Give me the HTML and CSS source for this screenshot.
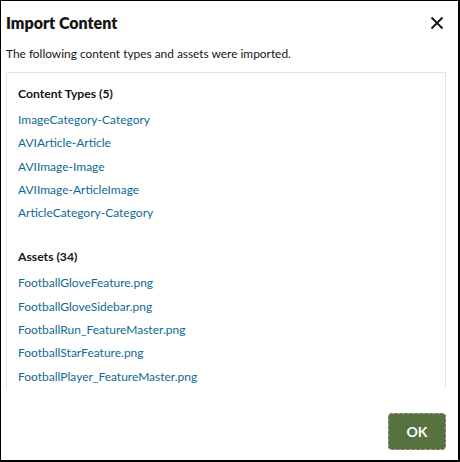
FILE: index.html
```html
<!DOCTYPE html>
<html>
	<head>
		<meta charset="utf-8" />
		<title>Import Content</title>
		<link rel="stylesheet" href="styles.css">
	</head>
	<body>
		<div class="dialog">
			<div class="dialog-header">
				<h1 class="dialog-title">Import Content</h1>
				<button class="close-btn" aria-label="Close">
					<svg width="14" height="14" viewBox="0 0 14 14">
						<path d="M1.5 1.5 L12.5 12.5 M12.5 1.5 L1.5 12.5" stroke="#111" stroke-width="1.8" fill="none"/>
					</svg>
				</button>
			</div>
			<p class="dialog-desc">The following content types and assets were imported.</p>
			<div class="result-box">
				<h2 class="group-title">Content Types (5)</h2>
				<ul class="item-list">
					<li><a href="#">ImageCategory-Category</a></li>
					<li><a href="#">AVIArticle-Article</a></li>
					<li><a href="#">AVIImage-Image</a></li>
					<li><a href="#">AVIImage-ArticleImage</a></li>
					<li><a href="#">ArticleCategory-Category</a></li>
				</ul>
				<h2 class="group-title assets">Assets (34)</h2>
				<ul class="item-list">
					<li><a href="#">FootballGloveFeature.png</a></li>
					<li><a href="#">FootballGloveSidebar.png</a></li>
					<li><a href="#">FootballRun_FeatureMaster.png</a></li>
					<li><a href="#">FootballStarFeature.png</a></li>
					<li><a href="#">FootballPlayer_FeatureMaster.png</a></li>
				</ul>
			</div>
			<div class="dialog-footer">
				<button class="ok-btn">OK</button>
			</div>
		</div>
	</body>
</html>
```

FILE: styles.css
```css
*{
	margin: 0;
	padding: 0;
	box-sizing: border-box;
}
body{
	font-family: Lato, "Liberation Sans", sans-serif;
	background: #fff;
	color: #161513;
}
.dialog{
	width: 460px;
	height: 462px;
	border: 1px solid #000;
	border-right-width: 2px;
	border-bottom-width: 2px;
	display: flex;
	flex-direction: column;
}
.dialog-header{
	display: flex;
	align-items: center;
	justify-content: space-between;
	padding: 10px 14px 0 5px;
	height: 33px;
}
.dialog-title{
	font-size: 16px;
	font-weight: 800;
	line-height: 22px;
}
.close-btn{
	border: none;
	background: none;
	width: 14px;
	height: 14px;
	display: flex;
}
.dialog-desc{
	font-size: 11.9px;
	line-height: 18px;
	padding: 11px 0 0 5px;
	height: 38px;
}
.result-box{
	margin: 0 12px 0 5px;
	height: 316px;
	overflow: hidden;
	border: 1px solid #e4e4e4;
	border-bottom: none;
	padding: 12px 12px 0 11px;
}
.group-title{
	font-size: 12.2px;
	font-weight: 700;
	line-height: 18px;
	margin-bottom: 8px;
}
.group-title.assets{
	margin-top: 21px;
}
.item-list{
	list-style: none;
}
.item-list li{
	font-size: 12px;
	line-height: 18px;
	height: 23.3px;
}
.item-list a{
	color: #0f6a93;
	text-decoration: none;
}
.dialog-footer{
	flex: 1;
	display: flex;
	justify-content: flex-end;
	align-items: flex-start;
	padding: 25px 12px 0 0;
}
.ok-btn{
	width: 58px;
	height: 37px;
	background: #56723f;
	color: #fff;
	font-family: Lato, "Liberation Sans", sans-serif;
	font-size: 14px;
	font-weight: 700;
	border: 1px dashed #a9a9a9;
	border-radius: 4px;
}
```
